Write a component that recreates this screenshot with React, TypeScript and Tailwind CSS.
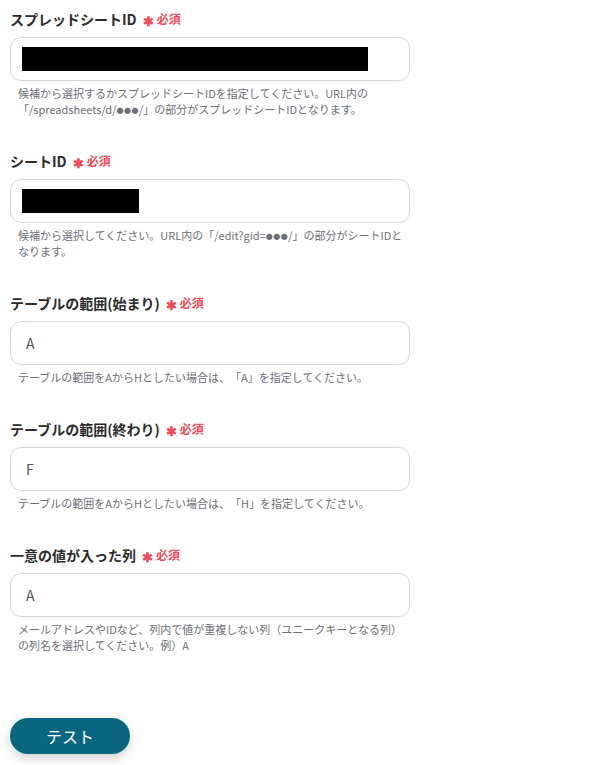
import React from "react";

type Field = {
  label: string;
  value?: string;
  mask?: string;
  help: React.ReactNode[];
};

const Dots = () => <span className="text-[7px] leading-none align-[1px] tracking-[0.5px]">●●●</span>;

const fields: Field[] = [
  {
    label: "スプレッドシートID",
    mask: "w-[346px]",
    help: [
      "候補から選択するかスプレッドシートIDを指定してください。URL内の",
      <>
        「/spreadsheets/d/<Dots />/」の部分がスプレッドシートIDとなります。
      </>,
    ],
  },
  {
    label: "シートID",
    mask: "w-[117px]",
    help: [
      <>
        候補から選択してください。URL内の「/edit?gid=<Dots />/」の部分がシートIDと
      </>,
      "なります。",
    ],
  },
  {
    label: "テーブルの範囲(始まり)",
    value: "A",
    help: ["テーブルの範囲をAからHとしたい場合は、「A」を指定してください。"],
  },
  {
    label: "テーブルの範囲(終わり)",
    value: "F",
    help: ["テーブルの範囲をAからHとしたい場合は、「H」を指定してください。"],
  },
  {
    label: "一意の値が入った列",
    value: "A",
    help: [
      "メールアドレスやIDなど、列内で値が重複しない列（ユニークキーとなる列）",
      "の列名を選択してください。例）A",
    ],
  },
];

export default function App() {
  return (
    <div
      className="min-h-[765px] bg-white px-[10px] pt-[9px] text-[#333] [text-spacing-trim:space-all]"
      style={{ fontFamily: '"Noto Sans CJK JP", "Noto Sans", sans-serif' }}
    >
      <div className="flex w-[400px] flex-col gap-[34px]">
        {fields.map((f, i) => (
          <div key={i} className="flex flex-col">
            <div className="mb-[8px] flex h-[20px] items-center gap-[6px]">
              <span className="text-[14px] font-bold leading-[20px] text-[#2b2b2b]">{f.label}</span>
              <span className="flex h-[20px] items-center gap-[3px] text-[12px] font-bold leading-[20px] text-[#ef4b5a]">
                <span className="mt-[2px] text-[13px] leading-none">✱</span>
                <span>必須</span>
              </span>
            </div>
            <div className="flex h-[44px] items-center rounded-[11px] border border-[#d4d7dd] bg-white px-[11px]">
              {f.mask ? (
                <div className={`h-[24px] bg-black ${f.mask}`} />
              ) : (
                <span className="pl-[4px] text-[14px] text-[#555]">{f.value}</span>
              )}
            </div>
            <div className="mt-[4px] pl-[8px] text-[11px] leading-[16px] text-[#6b6f76]">
              {f.help.map((h, j) => (
                <div key={j} className="h-[16px] whitespace-nowrap">
                  {h}
                </div>
              ))}
            </div>
          </div>
        ))}
      </div>
      <div className="mt-[65px]">
        <button className="flex h-[36px] w-[120px] items-center justify-center rounded-full bg-[#0b6780] text-[16px] text-white shadow-[0_4px_12px_rgba(0,0,0,0.18)]">
          テスト
        </button>
      </div>
    </div>
  );
}
